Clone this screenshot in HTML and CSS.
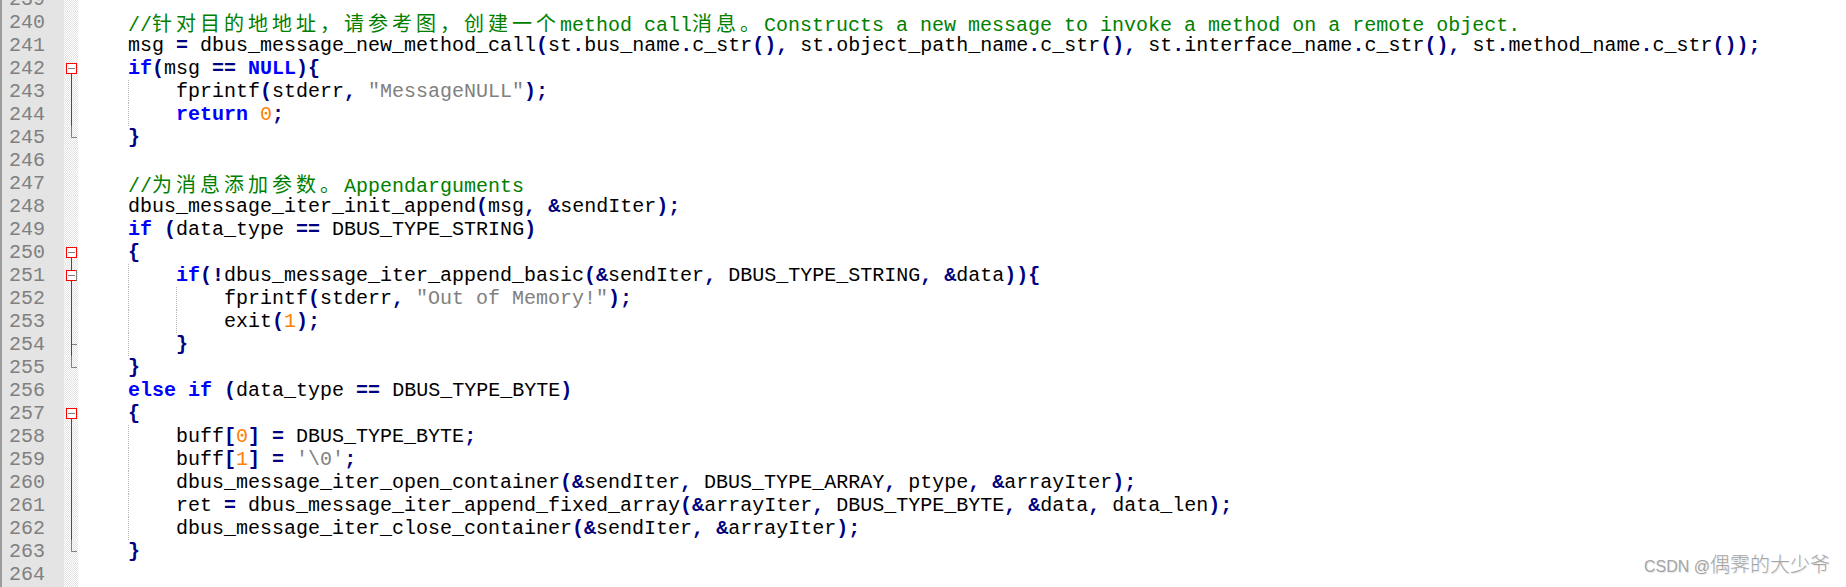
FILE: index.html
```html
<!DOCTYPE html>
<html lang="zh">
<head>
<meta charset="utf-8">
<title>Notepad++ - dbus</title>
<link rel="stylesheet" href="styles.css">
</head>
<body>
<div class="editor">
<div class="row"><span class="ln">239</span><span class="fold"></span><span class="code"></span></div>
<div class="row"><span class="ln">240</span><span class="fold"></span><span class="code"><span class="c">//<span class="cj">针对目的地地址，请参考图，创建一个</span>method call<span class="cj">消息。</span>Constructs a new message to invoke a method on a remote object.</span></span></div>
<div class="row"><span class="ln">241</span><span class="fold"></span><span class="code">msg <span class="o">=</span> dbus_message_new_method_call<span class="o">(</span>st<span class="o">.</span>bus_name<span class="o">.</span>c_str<span class="o">(),</span> st<span class="o">.</span>object_path_name<span class="o">.</span>c_str<span class="o">(),</span> st<span class="o">.</span>interface_name<span class="o">.</span>c_str<span class="o">(),</span> st<span class="o">.</span>method_name<span class="o">.</span>c_str<span class="o">());</span></span></div>
<div class="row"><span class="ln">242</span><span class="fold"><svg width="14" height="23" viewBox="0 0 14 23"><line x1="7.5" y1="17" x2="7.5" y2="23" class="red"/><rect x="2.5" y="6.5" width="10" height="10" class="box"/><line x1="4" y1="11.5" x2="11" y2="11.5" class="grey"/></svg></span><span class="code"><span class="k">if</span><span class="o">(</span>msg <span class="o">==</span> <span class="k">NULL</span><span class="o">){</span></span></div>
<div class="row"><span class="ln">243</span><span class="fold"><svg width="14" height="23" viewBox="0 0 14 23"><line x1="7.5" y1="0" x2="7.5" y2="23" class="red"/></svg></span><span class="code"><span class="ig">    </span>fprintf<span class="o">(</span>stderr<span class="o">,</span> <span class="s">"MessageNULL"</span><span class="o">);</span></span></div>
<div class="row"><span class="ln">244</span><span class="fold"><svg width="14" height="23" viewBox="0 0 14 23"><line x1="7.5" y1="0" x2="7.5" y2="23" class="red"/></svg></span><span class="code"><span class="ig">    </span><span class="k">return</span> <span class="n">0</span><span class="o">;</span></span></div>
<div class="row"><span class="ln">245</span><span class="fold"><svg width="14" height="23" viewBox="0 0 14 23"><path d="M7.5 0V11.5H13" class="grey"/></svg></span><span class="code"><span class="o">}</span></span></div>
<div class="row"><span class="ln">246</span><span class="fold"></span><span class="code"></span></div>
<div class="row"><span class="ln">247</span><span class="fold"></span><span class="code"><span class="c">//<span class="cj">为消息添加参数。</span>Appendarguments</span></span></div>
<div class="row"><span class="ln">248</span><span class="fold"></span><span class="code">dbus_message_iter_init_append<span class="o">(</span>msg<span class="o">,</span> <span class="o">&amp;</span>sendIter<span class="o">);</span></span></div>
<div class="row"><span class="ln">249</span><span class="fold"></span><span class="code"><span class="k">if</span> <span class="o">(</span>data_type <span class="o">==</span> DBUS_TYPE_STRING<span class="o">)</span></span></div>
<div class="row"><span class="ln">250</span><span class="fold"><svg width="14" height="23" viewBox="0 0 14 23"><line x1="7.5" y1="17" x2="7.5" y2="23" class="red"/><rect x="2.5" y="6.5" width="10" height="10" class="box"/><line x1="4" y1="11.5" x2="11" y2="11.5" class="grey"/></svg></span><span class="code"><span class="o">{</span></span></div>
<div class="row"><span class="ln">251</span><span class="fold"><svg width="14" height="23" viewBox="0 0 14 23"><line x1="7.5" y1="0" x2="7.5" y2="23" class="red"/><rect x="2.5" y="6.5" width="10" height="10" class="box"/><line x1="12.5" y1="6" x2="12.5" y2="17" class="grey"/><line x1="4" y1="11.5" x2="11" y2="11.5" class="grey"/></svg></span><span class="code"><span class="ig">    </span><span class="k">if</span><span class="o">(!</span>dbus_message_iter_append_basic<span class="o">(&amp;</span>sendIter<span class="o">,</span> DBUS_TYPE_STRING<span class="o">,</span> <span class="o">&amp;</span>data<span class="o">)){</span></span></div>
<div class="row"><span class="ln">252</span><span class="fold"><svg width="14" height="23" viewBox="0 0 14 23"><line x1="7.5" y1="0" x2="7.5" y2="23" class="red"/></svg></span><span class="code"><span class="ig">    </span><span class="ig">    </span>fprintf<span class="o">(</span>stderr<span class="o">,</span> <span class="s">"Out of Memory!"</span><span class="o">);</span></span></div>
<div class="row"><span class="ln">253</span><span class="fold"><svg width="14" height="23" viewBox="0 0 14 23"><line x1="7.5" y1="0" x2="7.5" y2="23" class="red"/></svg></span><span class="code"><span class="ig">    </span><span class="ig">    </span>exit<span class="o">(</span><span class="n">1</span><span class="o">);</span></span></div>
<div class="row"><span class="ln">254</span><span class="fold"><svg width="14" height="23" viewBox="0 0 14 23"><line x1="7.5" y1="0" x2="7.5" y2="23" class="red"/><line x1="8" y1="11.5" x2="13" y2="11.5" class="grey"/></svg></span><span class="code"><span class="ig">    </span><span class="o">}</span></span></div>
<div class="row"><span class="ln">255</span><span class="fold"><svg width="14" height="23" viewBox="0 0 14 23"><path d="M7.5 0V11.5H13" class="grey"/></svg></span><span class="code"><span class="o">}</span></span></div>
<div class="row"><span class="ln">256</span><span class="fold"></span><span class="code"><span class="k">else</span> <span class="k">if</span> <span class="o">(</span>data_type <span class="o">==</span> DBUS_TYPE_BYTE<span class="o">)</span></span></div>
<div class="row"><span class="ln">257</span><span class="fold"><svg width="14" height="23" viewBox="0 0 14 23"><line x1="7.5" y1="17" x2="7.5" y2="23" class="red"/><rect x="2.5" y="6.5" width="10" height="10" class="box"/><line x1="4" y1="11.5" x2="11" y2="11.5" class="grey"/></svg></span><span class="code"><span class="o">{</span></span></div>
<div class="row"><span class="ln">258</span><span class="fold"><svg width="14" height="23" viewBox="0 0 14 23"><line x1="7.5" y1="0" x2="7.5" y2="23" class="red"/></svg></span><span class="code"><span class="ig">    </span>buff<span class="o">[</span><span class="n">0</span><span class="o">]</span> <span class="o">=</span> DBUS_TYPE_BYTE<span class="o">;</span></span></div>
<div class="row"><span class="ln">259</span><span class="fold"><svg width="14" height="23" viewBox="0 0 14 23"><line x1="7.5" y1="0" x2="7.5" y2="23" class="red"/></svg></span><span class="code"><span class="ig">    </span>buff<span class="o">[</span><span class="n">1</span><span class="o">]</span> <span class="o">=</span> <span class="s">'\0'</span><span class="o">;</span></span></div>
<div class="row"><span class="ln">260</span><span class="fold"><svg width="14" height="23" viewBox="0 0 14 23"><line x1="7.5" y1="0" x2="7.5" y2="23" class="red"/></svg></span><span class="code"><span class="ig">    </span>dbus_message_iter_open_container<span class="o">(&amp;</span>sendIter<span class="o">,</span> DBUS_TYPE_ARRAY<span class="o">,</span> ptype<span class="o">,</span> <span class="o">&amp;</span>arrayIter<span class="o">);</span></span></div>
<div class="row"><span class="ln">261</span><span class="fold"><svg width="14" height="23" viewBox="0 0 14 23"><line x1="7.5" y1="0" x2="7.5" y2="23" class="red"/></svg></span><span class="code"><span class="ig">    </span>ret <span class="o">=</span> dbus_message_iter_append_fixed_array<span class="o">(&amp;</span>arrayIter<span class="o">,</span> DBUS_TYPE_BYTE<span class="o">,</span> <span class="o">&amp;</span>data<span class="o">,</span> data_len<span class="o">);</span></span></div>
<div class="row"><span class="ln">262</span><span class="fold"><svg width="14" height="23" viewBox="0 0 14 23"><line x1="7.5" y1="0" x2="7.5" y2="23" class="red"/></svg></span><span class="code"><span class="ig">    </span>dbus_message_iter_close_container<span class="o">(&amp;</span>sendIter<span class="o">,</span> <span class="o">&amp;</span>arrayIter<span class="o">);</span></span></div>
<div class="row"><span class="ln">263</span><span class="fold"><svg width="14" height="23" viewBox="0 0 14 23"><path d="M7.5 0V11.5H13" class="grey"/></svg></span><span class="code"><span class="o">}</span></span></div>
<div class="row"><span class="ln">264</span><span class="fold"></span><span class="code"></span></div>
<div class="row"><span class="ln">265</span><span class="fold"></span><span class="code"></span></div>
</div>
<div class="wm"><span class="wm-latin">CSDN @</span><span class="wm-cjk">偶霁的大少爷</span></div>
</body>
</html>
```

FILE: styles.css
```css
html, body {
  margin: 0;
  padding: 0;
  background: #ffffff;
}

body {
  position: relative;
  height: 587px;
  overflow: hidden;
}

.editor {
  margin-top: -12px;
  font-family: "Liberation Mono", "Noto Sans CJK SC", monospace;
  font-size: 20px;
  line-height: 23px;
  color: #000000;
}

.row {
  display: flex;
  height: 23px;
}

.ln {
  box-sizing: border-box;
  flex: 0 0 64px;
  width: 64px;
  height: 23px;
  padding-left: 7px;
  border-left: 2px solid #9c9c9c;
  background: #e4e4e4;
  color: #808080;
}

.fold {
  flex: 0 0 14px;
  width: 14px;
  height: 23px;
  background: repeating-conic-gradient(#e2e2e2 0 25%, #ffffff 0 50%) 0 0 / 2px 2px;
}

.fold svg {
  display: block;
}

.fold .red {
  stroke: #ff0000;
  stroke-width: 1;
  fill: none;
}

.fold .grey {
  stroke: #808080;
  stroke-width: 1;
  fill: none;
}

.fold .box {
  stroke: #ff0000;
  stroke-width: 1;
  fill: #ffffff;
}

.code {
  flex: 1 1 auto;
  padding-left: 50px;
  white-space: pre;
  height: 23px;
}

.ig {
  display: inline-block;
  width: 48px;
  height: 23px;
  vertical-align: top;
  background: repeating-linear-gradient(to bottom, #b8b8b8 0 1px, transparent 1px 2px) no-repeat 0 0 / 1px 100%;
}

.k {
  color: #0000ff;
  font-weight: bold;
}

.o {
  color: #000080;
  font-weight: bold;
}

.n {
  color: #ff8000;
}

.s {
  color: #808080;
}

.c {
  color: #008000;
}

.cj {
  font-family: "Noto Sans CJK SC", sans-serif;
  letter-spacing: 4px;
}

.wm {
  position: absolute;
  right: 16px;
  bottom: 8px;
  line-height: 24px;
  color: #a4a4a4;
  text-shadow: 1px 1px 1px rgba(0, 0, 0, 0.1);
  white-space: nowrap;
}

.wm-latin {
  font-family: "Liberation Sans", Arial, sans-serif;
  font-size: 16px;
}

.wm-cjk {
  font-family: "Noto Sans CJK SC", sans-serif;
  font-size: 20px;
  font-weight: 300;
}
```
